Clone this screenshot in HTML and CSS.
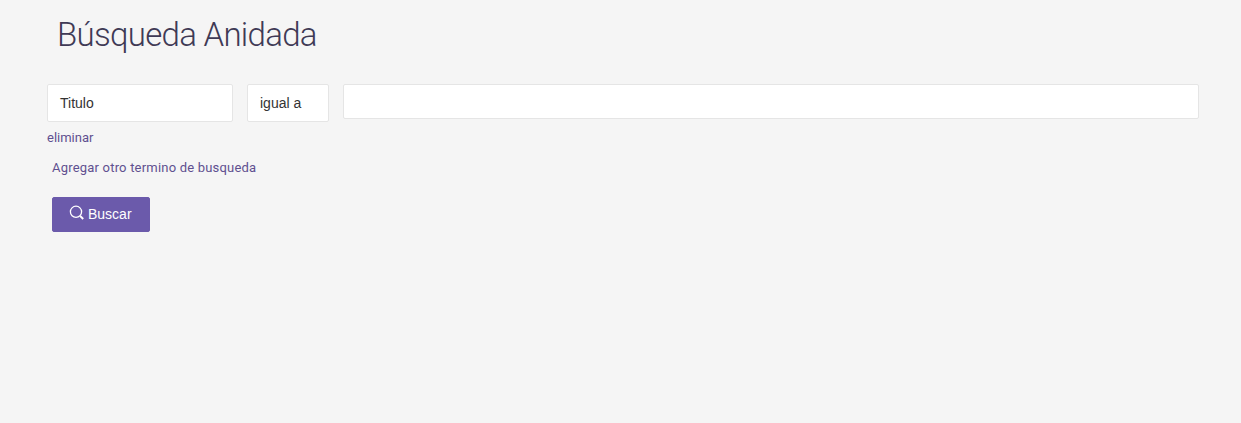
FILE: index.html
```html
<!DOCTYPE html>
<html lang="es">
<head>
    <meta charset="UTF-8">
    <title>Búsqueda Anidada</title>
    <link rel="stylesheet" href="styles.css">
</head>
<body>
    <div class="search-page">
        <h1 class="page-title">Búsqueda Anidada</h1>

        <form class="search-form" onsubmit="return false">
            <div class="term-row">
                <div class="field field-select field-title">Titulo</div>
                <div class="field field-select field-op">igual a</div>
                <input class="field field-input" type="text">
            </div>
            <a class="link remove-link" href="#">eliminar</a>
            <a class="link add-link" href="#">Agregar otro termino de busqueda</a>
            <button class="search-button" type="submit">
                <svg class="search-icon" viewBox="0 0 16 16" width="16" height="16" fill="none" stroke="currentColor">
                    <circle cx="7" cy="6.8" r="5.6" stroke-width="1.3"/>
                    <path d="M11.2 11l3 3" stroke-width="2"/>
                </svg>
                Buscar
            </button>
        </form>
    </div>
</body>
</html>
```

FILE: styles.css
```css
* {
    margin: 0;
    padding: 0;
    box-sizing: border-box;
}

body {
    font-family: Roboto, 'Open Sans', sans-serif;
    background: #f5f5f5;
    color: #333;
    min-height: 100vh;
}

.search-page {
    padding: 14px 42px 0 47px;
}

.page-title {
    font-size: 33px;
    font-weight: 300;
    line-height: 42px;
    letter-spacing: -0.7px;
    color: #3f3a55;
    margin-left: 10px;
    margin-bottom: 28px;
}

.term-row {
    display: flex;
    align-items: flex-start;
    gap: 14px;
}

.field {
    background: #fff;
    border: 1px solid #e5e5e5;
    border-radius: 2px;
    font-family: 'Liberation Sans', Arial, sans-serif;
    font-size: 14px;
    color: #333;
}

.field-select {
    height: 38px;
    line-height: 36px;
    padding-left: 12px;
}

.field-title {
    width: 186px;
}

.field-op {
    width: 82px;
}

.field-input {
    flex: 1;
    height: 35px;
}

.link {
    display: block;
    font-size: 13px;
    line-height: 16px;
    color: #5f5090;
    text-decoration: none;
}

.remove-link {
    margin-top: 8px;
}

.add-link {
    margin-top: 14px;
    margin-left: 5px;
    letter-spacing: 0.2px;
}

.search-button {
    display: flex;
    align-items: center;
    gap: 3px;
    width: 98px;
    height: 35px;
    margin-top: 21px;
    margin-left: 5px;
    padding-left: 16px;
    padding-bottom: 2px;
    background: #6b5aab;
    border: 1px solid #6b5aab;
    border-radius: 2px;
    color: #fff;
    font-family: 'Liberation Sans', Arial, sans-serif;
    font-size: 14px;
    cursor: pointer;
}

.search-icon {
    margin-top: -1px;
}
```
